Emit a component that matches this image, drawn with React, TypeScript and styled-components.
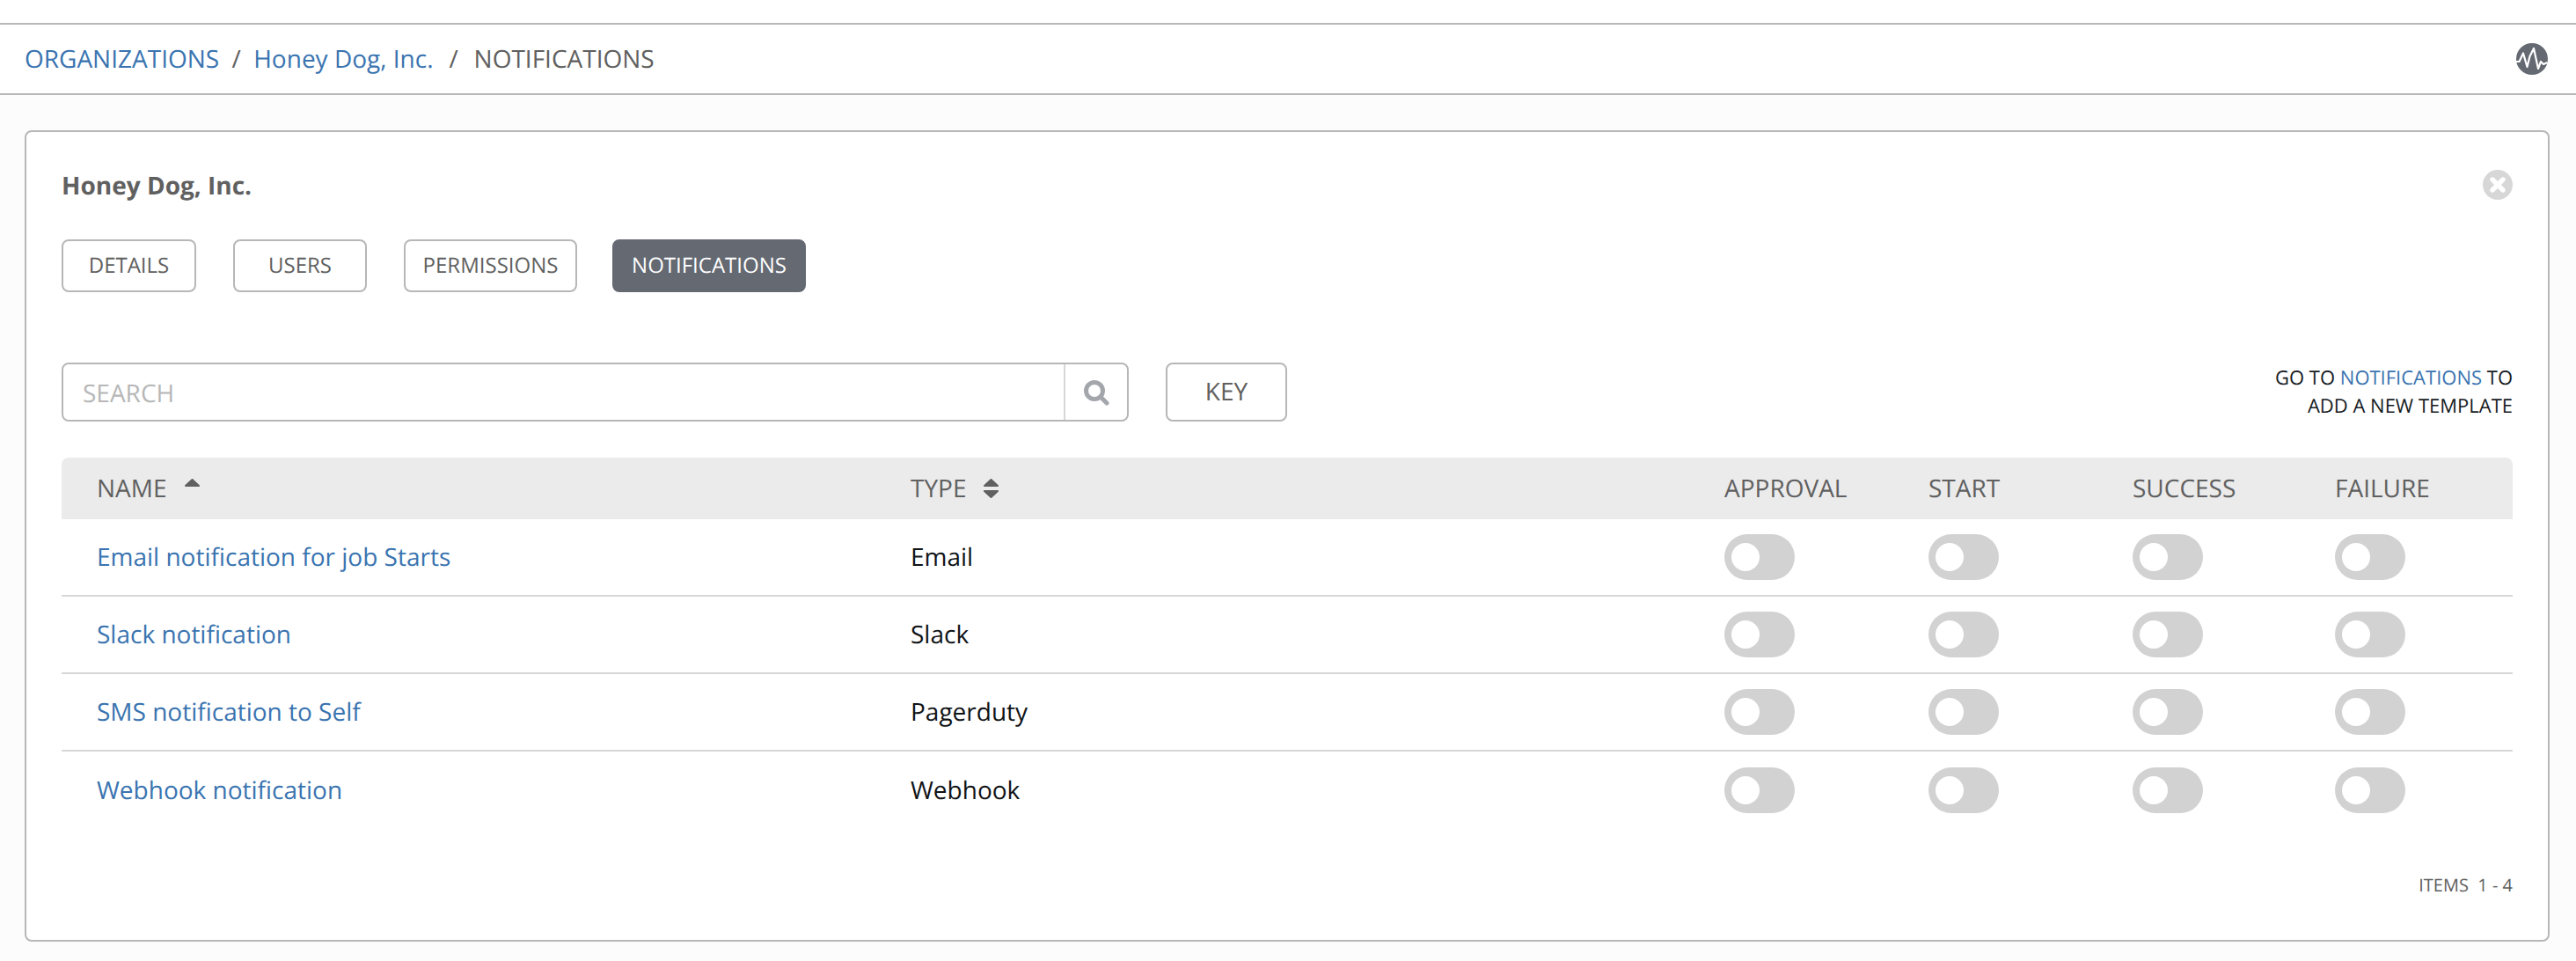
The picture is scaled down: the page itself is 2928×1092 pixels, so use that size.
import React from "react";
import styled, { createGlobalStyle } from "styled-components";

const Global = createGlobalStyle`
  html, body { margin: 0; padding: 0; background: #fcfcfc; }
  body {
    font-family: "Open Sans", "Liberation Sans", sans-serif;
    color: #606060;
    text-rendering: geometricPrecision;
  }
  * { box-sizing: border-box; }
`;

const TopStrip = styled.div`
  height: 28px;
  background: #fff;
  border-bottom: 2px solid #b7b7b7;
`;
const BreadcrumbBar = styled.nav`
  height: 80px;
  padding: 0 32px 0 28px;
  display: flex;
  align-items: center;
  justify-content: space-between;
  background: #fff;
  border-bottom: 2px solid #b7b7b7;
  font-size: 28px;
`;
const Crumbs = styled.div`
  display: flex;
  align-items: center;
`;
const Link = styled.a`
  color: #3a74b0;
  text-decoration: none;
`;
const Sep = styled.span<{ $w: number }>`
  width: ${(p) => p.$w}px;
  text-align: center;
  color: #606060;
`;
const Main = styled.main`
  padding: 40px 30px 21px 28px;
`;
const Card = styled.section`
  height: 922px;
  padding: 40px;
  background: #fff;
  border: 2px solid #b7b7b7;
  border-radius: 8px;
`;
const CardHead = styled.div`
  height: 40px;
  display: flex;
  align-items: center;
  justify-content: space-between;
`;
const Title = styled.h2`
  margin: 0;
  padding-top: 2px;
  font-size: 28px;
  font-weight: 700;
  color: #606060;
`;
const Tabs = styled.div`
  display: flex;
  margin-top: 42px;
`;
const Tab = styled.button<{ $active?: boolean; $w: number; $mr: number }>`
  width: ${(p) => p.$w}px;
  margin-right: ${(p) => p.$mr}px;
  height: 60px;
  padding: 0 0 2px;
  font: inherit;
  font-size: 24px;
  text-rendering: geometricPrecision;
  border-radius: 8px;
  border: 2px solid ${(p) => (p.$active ? "#646972" : "#b7b7b7")};
  background: ${(p) => (p.$active ? "#646972" : "#fff")};
  color: ${(p) => (p.$active ? "#fff" : "#606060")};
`;
const Toolbar = styled.div`
  display: flex;
  align-items: flex-start;
  margin-top: 80px;
  height: 108px;
`;
const SearchBox = styled.div`
  width: 1213px;
  height: 67px;
  display: flex;
  border: 2px solid #b7b7b7;
  border-radius: 8px;
  background: #fff;
`;
const SearchInput = styled.input`
  flex: 1;
  min-width: 0;
  border: 0;
  outline: 0;
  padding: 2px 22px 0;
  font: inherit;
  font-size: 28px;
  text-rendering: geometricPrecision;
  background: transparent;
  &::placeholder { color: #b7b7b7; opacity: 1; }
`;
const SearchButton = styled.div`
  width: 72px;
  display: flex;
  align-items: center;
  justify-content: center;
  border-left: 2px solid #d7d7d7;
`;
const KeyButton = styled.button`
  width: 138px;
  height: 67px;
  margin-left: 42px;
  padding: 0 0 2px;
  font: inherit;
  font-size: 28px;
  text-rendering: geometricPrecision;
  color: #606060;
  background: #fff;
  border: 2px solid #b7b7b7;
  border-radius: 8px;
`;
const Hint = styled.div`
  margin-left: auto;
  padding-top: 1px;
  text-align: right;
  font-size: 22px;
  line-height: 32px;
  color: #161b1f;
`;
const grid = `
  display: grid;
  grid-template-columns: 925px 925px 232px 232px 230px 1fr;
  padding-left: 40px;
  align-items: center;
`;
const HeadRow = styled.div`
  ${grid}
  height: 70px;
  padding-bottom: 1px;
  background: #ebebeb;
  border-radius: 8px 8px 0 0;
  font-size: 28px;
  color: #606060;
`;
const HeadCell = styled.div`
  display: flex;
  align-items: center;
  gap: 20px;
`;
const Body = styled.div`
  display: block;
`;
const Row = styled.div`
  ${grid}
  height: 88px;
  font-size: 28px;
  color: #111417;
  border-bottom: 2px solid #d7d7d7;
  &:last-child { border-bottom: 0; }
`;
const Toggle = styled.span`
  display: flex;
  align-items: center;
  width: 80px;
  height: 52px;
  padding-left: 8px;
  border-radius: 26px;
  background: #d2d2d2;
`;
const Knob = styled.span`
  width: 32px;
  height: 32px;
  border-radius: 50%;
  background: #fff;
`;
const Footer = styled.div`
  margin-top: 50px;
  text-align: right;
  font-size: 20px;
  color: #606060;
  white-space: pre;
`;

const PulseIcon = () => (
  <svg width="36" height="36" viewBox="0 0 36 36" aria-hidden>
    <circle cx="18" cy="18" r="18" fill="#646972" />
    <path
      d="M0 21h3.500L8 11.500l4.500 15.500 3-12 4.500-9 5 23 3-8 3 3 4.500-2"
      fill="none"
      stroke="#fff"
      strokeWidth="2.2"
      strokeLinejoin="round"
    />
  </svg>
);
const CloseIcon = () => (
  <svg width="34" height="34" viewBox="0 0 34 34" aria-hidden>
    <circle cx="17" cy="17" r="17" fill="#d7d7d7" />
    <path d="M11 11l12 12M23 11L11 23" stroke="#fff" strokeWidth="5.4" strokeLinecap="round" />
  </svg>
);
const SearchIcon = () => (
  <svg width="30" height="30" viewBox="0 0 30 30" aria-hidden>
    <circle cx="13" cy="13" r="9.5" fill="none" stroke="#a3a6ab" strokeWidth="5" />
    <path d="M20 20l7 7" stroke="#a3a6ab" strokeWidth="5" strokeLinecap="round" />
  </svg>
);
const SortIcon = ({ down = true }: { down?: boolean }) => (
  <svg width="17" height="22" viewBox="0 0 17 22" fill="#606060" stroke="#606060" strokeWidth="2" strokeLinejoin="round" aria-hidden>
    <path d="M8.500 1L16 8H1z" />
    {down && <path d="M1 14h15l-7.500 7z" />}
  </svg>
);

const rows = [
  ["Email notification for job Starts", "Email"],
  ["Slack notification", "Slack"],
  ["SMS notification to Self", "Pagerduty"],
  ["Webhook notification", "Webhook"],
];

export default function App() {
  return (
    <>
      <Global />
      <TopStrip />
      <BreadcrumbBar>
        <Crumbs>
          <Link>ORGANIZATIONS</Link>
          <Sep $w={39}>/</Sep>
          <Link>Honey Dog, Inc.</Link>
          <Sep $w={46}>/</Sep>
          <span>NOTIFICATIONS</span>
        </Crumbs>
        <PulseIcon />
      </BreadcrumbBar>
      <Main>
        <Card>
          <CardHead>
            <Title>Honey Dog, Inc.</Title>
            <CloseIcon />
          </CardHead>
          <Tabs>
            <Tab $w={153} $mr={42}>DETAILS</Tab>
            <Tab $w={152} $mr={42}>USERS</Tab>
            <Tab $w={197} $mr={40}>PERMISSIONS</Tab>
            <Tab $w={220} $mr={0} $active>NOTIFICATIONS</Tab>
          </Tabs>
          <Toolbar>
            <SearchBox>
              <SearchInput placeholder="SEARCH" />
              <SearchButton><SearchIcon /></SearchButton>
            </SearchBox>
            <KeyButton>KEY</KeyButton>
            <Hint>
              GO TO <Link>NOTIFICATIONS</Link> TO
              <br />
              ADD A NEW TEMPLATE
            </Hint>
          </Toolbar>
          <HeadRow>
            <HeadCell>NAME <SortIcon down={false} /></HeadCell>
            <HeadCell>TYPE <SortIcon /></HeadCell>
            <HeadCell>APPROVAL</HeadCell>
            <HeadCell>START</HeadCell>
            <HeadCell>SUCCESS</HeadCell>
            <HeadCell>FAILURE</HeadCell>
          </HeadRow>
          <Body>
            {rows.map(([name, type]) => (
              <Row key={name}>
                <Link>{name}</Link>
                <span>{type}</span>
                {[0, 1, 2, 3].map((i) => (
                  <Toggle key={i}><Knob /></Toggle>
                ))}
              </Row>
            ))}
          </Body>
          <Footer>ITEMS  1 - 4</Footer>
        </Card>
      </Main>
    </>
  );
}
